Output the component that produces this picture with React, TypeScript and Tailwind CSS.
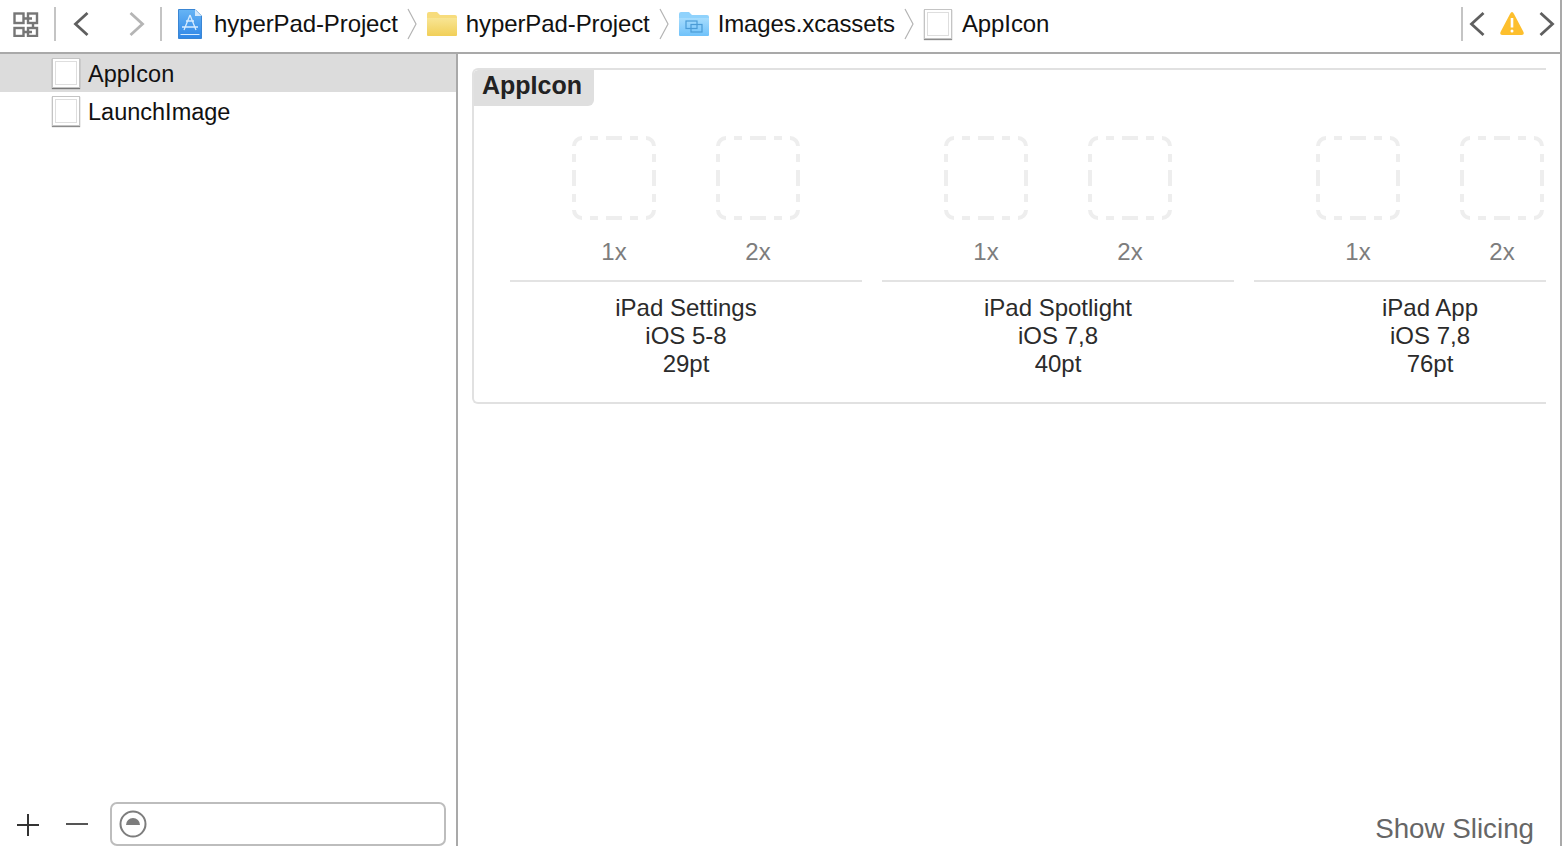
import React from 'react';

const ChevronLeft = ({ color = '#5f5f5f' }: { color?: string }) => (
  <svg width="18" height="26" viewBox="0 0 18 26" fill="none">
    <path d="M15.5 2 L3.5 13 L15.5 24" stroke={color} strokeWidth="2.8" />
  </svg>
);

const ChevronRight = ({ color = '#5f5f5f' }: { color?: string }) => (
  <svg width="18" height="26" viewBox="0 0 18 26" fill="none">
    <path d="M2.5 2 L14.5 13 L2.5 24" stroke={color} strokeWidth="2.8" />
  </svg>
);

const PathArrow = () => (
  <svg width="10" height="32" viewBox="0 0 10 32" fill="none">
    <path d="M1 1 L9 16 L1 31" stroke="#b4b4b4" strokeWidth="1.2" />
  </svg>
);

const RelatedItems = () => (
  <svg width="28" height="26" viewBox="0 0 28 26" fill="none" stroke="#767676" strokeWidth="2.4">
    <rect x="2.5" y="2.5" width="9" height="9.5" />
    <rect x="16" y="2.5" width="9" height="9.5" />
    <rect x="2.5" y="17" width="9" height="8" />
    <rect x="16" y="17" width="9" height="8" />
    <path d="M11 7.5 H20 M11 21 H20 M21 12 V17" />
  </svg>
);

const ProjectIcon = () => (
  <svg width="24" height="30" viewBox="0 0 24 30">
    <defs>
      <linearGradient id="proj" x1="0" y1="0" x2="0" y2="1">
        <stop offset="0" stopColor="#66b4f5" />
        <stop offset="1" stopColor="#2f86e6" />
      </linearGradient>
    </defs>
    <path d="M0.5 0.5 H17 L23.5 7 V29.5 H0.5 Z" fill="url(#proj)" stroke="#3a86d4" />
    <path d="M17 0.5 V7 H23.5 Z" fill="#d3e8fb" />
    <path d="M12 6 L6 21 M12 6 L18 21 M4 18 H20 M8 12 H16" stroke="#d7ecff" strokeWidth="1.3" fill="none" />
    <path d="M2.5 25.5 H21.5" stroke="#d7ecff" strokeWidth="1" />
  </svg>
);

const FolderIcon = ({ id, top, bottom, tab, blue }: { id: string; top: string; bottom: string; tab: string; blue?: boolean }) => (
  <svg width="30" height="26" viewBox="0 0 30 26">
    <defs>
      <linearGradient id={id} x1="0" y1="0" x2="0" y2="1">
        <stop offset="0" stopColor={top} />
        <stop offset="1" stopColor={bottom} />
      </linearGradient>
    </defs>
    <path d="M0 3 Q0 1 2 1 H10 L13 4 H28 Q30 4 30 6 V10 H0 Z" fill={tab} />
    <path d="M0 7 H30 V24 Q30 25 29 25 H1 Q0 25 0 24 Z" fill={`url(#${id})`} />
    {blue && (
      <g fill="none" stroke="#4a9bd6" strokeWidth="1.2">
        <rect x="7" y="10" width="11" height="7.5" />
        <rect x="12" y="13.5" width="11" height="7.5" />
      </g>
    )}
  </svg>
);

const AssetIcon = () => (
  <div className="h-[30px] w-[28px] shrink-0 border border-[#c4c4c4] bg-white p-[2px] shadow-[0_1px_1px_rgba(0,0,0,0.45)]">
    <div className="h-full w-full border border-[#dedede] bg-white" />
  </div>
);

const WarningIcon = () => (
  <svg width="26" height="26" viewBox="0 0 26 26">
    <path d="M13 1 Q14 1 15 3 L24.5 21 Q25.5 24 22.5 24 H3.5 Q0.5 24 1.5 21 L11 3 Q12 1 13 1 Z" fill="#fdbf2d" />
    <path d="M13 7 V16.5" stroke="#fff" strokeWidth="2.6" />
    <circle cx="13" cy="20" r="1.5" fill="#fff" />
  </svg>
);

const Crumb = ({ icon, label }: { icon: React.ReactNode; label: string }) => (
  <div className="flex items-center">
    {icon}
    <span className="text-[24px] tracking-[-0.1px] text-[#111]">{label}</span>
  </div>
);

// well outline: solid corners, then dashes of 8, 16 and 8 along each side
const slotDashes =
  'M2 10 A8 8 0 0 1 10 2 M74 2 A8 8 0 0 1 82 10 M82 74 A8 8 0 0 1 74 82 M10 82 A8 8 0 0 1 2 74 ' +
  'M18 2 H26 M34 2 H50 M58 2 H66 M18 82 H26 M34 82 H50 M58 82 H66 ' +
  'M2 18 V26 M2 34 V50 M2 58 V66 M82 18 V26 M82 34 V50 M82 58 V66';

const Slot = ({ label }: { label: string }) => (
  <div className="flex w-[84px] flex-col items-center">
    <svg width="84" height="84" viewBox="0 0 84 84" fill="none">
      <path d={slotDashes} stroke="#eeeeee" strokeWidth="4" />
    </svg>
    <span className="mt-[18px] text-[24px] leading-[28px] text-[#7d7d7d]">{label}</span>
  </div>
);

const IconSet = ({ name, ios, size }: { name: string; ios: string; size: string }) => (
  <div className="w-[352px] shrink-0">
    <div className="flex justify-center gap-[60px] border-b-2 border-[#e3e3e3] pb-[14px]">
      <Slot label="1x" />
      <Slot label="2x" />
    </div>
    <div className="mt-[12px] text-center text-[24px] leading-[28px] text-[#2b2b2b]">
      <div>{name}</div>
      <div>{ios}</div>
      <div>{size}</div>
    </div>
  </div>
);

const Row = ({ label, active }: { label: string; active?: boolean }) => (
  <div className={`flex h-[38px] items-center gap-[8px] pl-[52px] ${active ? 'bg-[#dcdcdc]' : ''}`}>
    <AssetIcon />
    <span className="pt-[3px] text-[23.5px] text-[#111]">{label}</span>
  </div>
);

export default function App() {
  return (
    <div className="flex h-[846px] w-[1562px] flex-col overflow-hidden border-r-2 border-[#a9a9a9] bg-white font-['Liberation_Sans',Arial,sans-serif]">
      <header className="flex h-[54px] shrink-0 items-center border-b-2 border-[#a9a9a9] pb-[4px]">
        <div className="ml-[12px]"><RelatedItems /></div>
        <div className="ml-[14px] h-[34px] w-[2px] bg-[#c4c4c4]" />
        <div className="ml-[16px]"><ChevronLeft /></div>
        <div className="ml-[38px]"><ChevronRight color="#b5b5b5" /></div>
        <div className="ml-[14px] h-[34px] w-[2px] bg-[#c4c4c4]" />
        <div className="ml-[16px] flex items-center">
          <Crumb icon={<span className="mr-[12px] flex"><ProjectIcon /></span>} label="hyperPad-Project" />
          <span className="ml-[9px] mr-[10px] flex"><PathArrow /></span>
          <Crumb icon={<span className="mr-[9px] flex"><FolderIcon id="yellow" top="#f8e594" bottom="#f1cf58" tab="#f7dc7c" /></span>} label="hyperPad-Project" />
          <span className="ml-[9px] mr-[10px] flex"><PathArrow /></span>
          <Crumb icon={<span className="mr-[9px] flex"><FolderIcon id="blue" top="#a6dcfd" bottom="#70c2fa" tab="#8fd2fc" blue /></span>} label="Images.xcassets" />
          <span className="ml-[9px] mr-[10px] flex"><PathArrow /></span>
          <Crumb icon={<span className="mr-[10px] flex"><AssetIcon /></span>} label="AppIcon" />
        </div>
        <div className="ml-auto flex items-center">
          <div className="h-[34px] w-[2px] bg-[#c4c4c4]" />
          <div className="ml-[5px]"><ChevronLeft /></div>
          <div className="ml-[13px]"><WarningIcon /></div>
          <div className="ml-[13px] mr-[4px]"><ChevronRight /></div>
        </div>
      </header>

      <div className="flex min-h-0 flex-1">
        <aside className="flex w-[458px] shrink-0 flex-col border-r-2 border-[#a9a9a9]">
          <Row label="AppIcon" active />
          <Row label="LaunchImage" />
          <div className="mt-auto flex items-center pl-[16px]">
            <svg width="24" height="24" viewBox="0 0 24 24" stroke="#333" strokeWidth="2">
              <path d="M1 13 H23 M12 2 V24" />
            </svg>
            <svg className="ml-[25px]" width="24" height="24" viewBox="0 0 24 24" stroke="#555" strokeWidth="2">
              <path d="M1 12 H23" />
            </svg>
            <div className="ml-[21px] flex h-[44px] w-[336px] items-center rounded-[7px] border-2 border-[#bdbdbd] pl-[7px]">
              <svg width="28" height="28" viewBox="0 0 28 28">
                <circle cx="14" cy="14" r="12.5" fill="none" stroke="#7d7d7d" strokeWidth="2" />
                <path d="M7 15 A7 7 0 0 1 21 15 Z" fill="#7d7d7d" />
              </svg>
            </div>
          </div>
        </aside>

        <main className="flex min-w-0 flex-1 flex-col pl-[14px] pr-[14px] pt-[14px]">
          <section className="relative h-[336px] overflow-hidden rounded-l-[6px] border-y-2 border-l-2 border-[#e1e1e1] pl-[36px] pt-[66px]">
            <div className="absolute left-[-2px] top-0 flex h-[36px] w-[122px] items-center rounded-br-[6px] rounded-tl-[6px] bg-[#dfdfdf] pb-[4px] pl-[10px] text-[25px] font-bold text-[#222]">
              AppIcon
            </div>
            <div className="flex gap-[20px]">
              <IconSet name="iPad Settings" ios="iOS 5-8" size="29pt" />
              <IconSet name="iPad Spotlight" ios="iOS 7,8" size="40pt" />
              <IconSet name="iPad App" ios="iOS 7,8" size="76pt" />
            </div>
          </section>
          <div className="mt-auto pb-[1px] pr-[12px] text-right text-[27.75px] leading-[32px] text-[#666]">Show Slicing</div>
        </main>
      </div>
    </div>
  );
}
